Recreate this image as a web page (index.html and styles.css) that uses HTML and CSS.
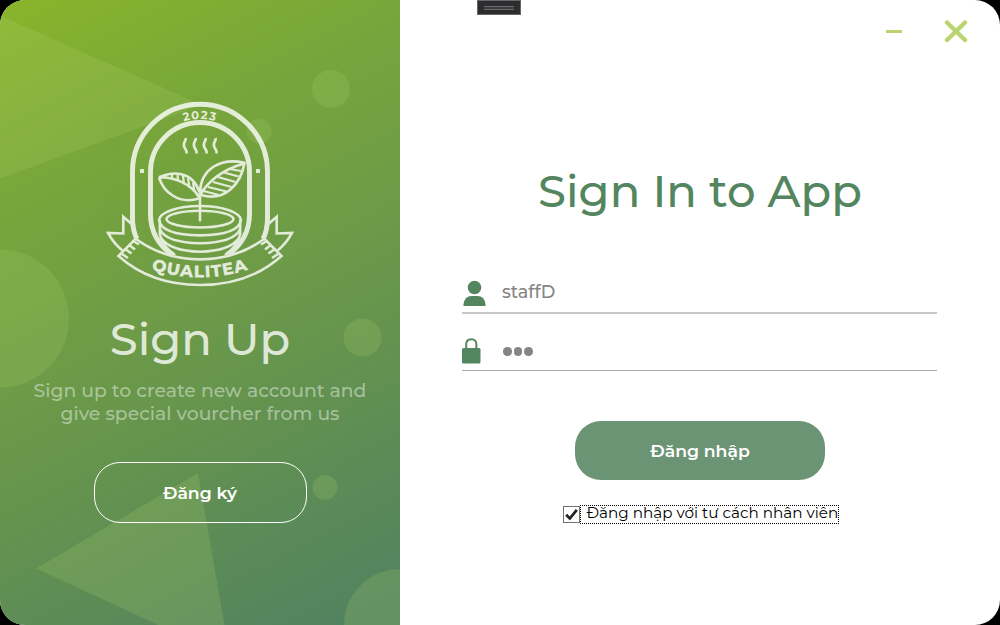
FILE: index.html
```html
<!DOCTYPE html>
<html lang="vi">
<head>
<meta charset="utf-8">
<title>Sign In</title>
<link rel="stylesheet" href="styles.css">
</head>
<body>
<div class="window">
  <aside class="promo">
    <svg class="shapes" viewBox="0 0 400 625" aria-hidden="true">
      <path d="M0 15.500L202 105L0 178.500Z"/>
      <circle cx="331" cy="89" r="19"/>
      <circle cx="259" cy="131" r="12.500"/>
      <circle cx="0" cy="318.500" r="69"/>
      <circle cx="362.500" cy="337.500" r="19"/>
      <circle cx="325" cy="487.500" r="12.500"/>
      <circle cx="400" cy="625" r="56"/>
      <path d="M198 473L36 568.500L158 625H224.500Z"/>
    </svg>
    <svg class="logo" viewBox="105 100 190 188" role="img" aria-label="Qualitea">
      <defs>
        <path id="year-arc" d="M146 173A54 54 0 0 1 254 173"/>
        <path id="name-arc" d="M140 265.500Q200 289.500 260 265.500"/>
        <g id="half" fill="none" stroke="#fff" stroke-width="2.600">
          <path stroke-width="4.900" d="M200 104.200A67.500 67.500 0 0 0 132.500 171.700V219Q132.800 231 137 239"/>
          <path stroke-width="4.900" d="M200 122.500A49.500 49.500 0 0 0 150.500 172V215Q151 240 172 254.500"/>
          <path d="M134 226L123.300 216.800V233.500L108 232.900Q114 244 123 251M136 238.300L118.500 256Q151 285 200 285M136 239Q163 259 200 259.400"/>
          <path d="M132.500 240.500L139 244.500M128.500 244.500L135 249.500M124.500 248.500L131.500 253.500M120.500 253L128 258"/>
          <path d="M200 206A41 14.600 0 0 0 159 220.600Q162 235 200 235.400M200 210.700A33.500 8.400 0 0 0 200 227.500M159.800 220V234Q162 246 175 255M160 229.500Q166 242.500 200 243.300M161 238Q170 251 200 251.700"/>
        </g>
      </defs>
      <use href="#half"/>
      <use href="#half" transform="matrix(-1 0 0 1 400 0)"/>
      <g fill="none" stroke="#fff" stroke-width="2.600" stroke-linejoin="round">
        <path d="M200 189V221.500"/>
        <path d="M159 177.300C172 171.500 192 170 199.500 192M159 177.300C163 191 178 205 199 198.500M159 177.300C175 177 191 184 199 197"/>
        <path d="M200 192C201 169 220 157.500 244.500 162.700C241 184 225 202 201 195M200 195C209 180 225 169 244 163.500"/>
        <path stroke-width="2.200" d="M172 174V179M177.500 174.500L178 181M183 175.500L184 184M188 178L189.500 187.500M193 182.500L194.500 191.500"/>
        <path stroke-width="2.200" d="M230 169L241 171M224 172.500L238.500 176.500M218 177L235.500 182M213 182L231.500 187M208 187L226.500 191.500M203.500 191L219 195"/>
        <path stroke-width="2.700" d="M185.500 138c1 3-2.500 4-1.500 8s3.500 4 2.500 7.500M195.500 138c1 3-2.500 4-1.500 8s3.500 4 2.500 7.500M205.500 138c1 3-2.500 4-1.500 8s3.500 4 2.500 7.500M215.500 138c1 3-2.500 4-1.500 8s3.500 4 2.500 7.500"/>
      </g>
      <path fill="#fff" d="M140 169h4v4h-4zM256 169h4v4h-4z"/>
      <text class="logo-year"><textPath href="#year-arc" startOffset="50%">2023</textPath></text>
      <text class="logo-name"><textPath href="#name-arc" startOffset="50%">QUALITEA</textPath></text>
    </svg>
    <h1 class="promo-title">Sign Up</h1>
    <p class="promo-text">Sign up to create new account and<br>give special vourcher from us</p>
    <button class="register"><span>Đăng ký</span></button>
  </aside>
  <main class="login">
    <div class="handle"><i></i></div>
    <div class="controls">
      <svg width="18" height="4" viewBox="0 0 18 4"><path class="control" d="M1 2.500H17" stroke-width="3" stroke-linecap="butt"/></svg>
      <svg width="24" height="24" viewBox="0 0 24 24"><path class="control" d="M3 3.500L21 21M21 3.500L3 21" stroke-width="4.400" stroke-linecap="round"/></svg>
    </div>
    <h2 class="login-title">Sign In to App</h2>
    <div class="field">
      <svg class="icon" width="26" height="28" viewBox="0 0 26 28"><circle cx="12.500" cy="8.500" r="6.800"/><path d="M1.500 27V25.500Q2.500 17 9.500 17H15.500Q22.500 17 23.500 25.500V27Z"/></svg>
      <span class="value">staffD</span>
    </div>
    <div class="field password">
      <svg class="icon" width="26" height="28" viewBox="0 0 26 28"><rect x="0" y="11" width="18.500" height="15.500" rx="1.500"/><path class="shackle" d="M4.200 12V7.500Q4.200 2.300 9.300 2.300T14.400 7.500V12"/></svg>
      <span class="dots"><i></i><i></i><i></i></span>
    </div>
    <button class="submit"><span>Đăng nhập</span></button>
    <label class="staff">
      <svg width="17" height="17" viewBox="0 0 17 17"><rect x="0.500" y="0.500" width="16" height="16" fill="#fff" stroke="#707070"/><path d="M3.200 8.800L6.800 12.500L13.800 3.800" fill="none" stroke="#212121" stroke-width="2.700"/></svg>
      <span class="staff-box">Đăng nhập với tư cách nhân viên</span>
    </label>
  </main>
</div>
</body>
</html>
```
FILE: styles.css
```css
* { box-sizing: border-box; }
body {
  margin: 0;
  background: #000;
  font-family: Montserrat, Inter, "Noto Sans", sans-serif;
  font-weight: 500;
}
h1, h2, p { margin: 0; font-weight: 500; white-space: nowrap; }
button { font: inherit; padding: 0; }
.window {
  display: flex;
  width: 1000px;
  height: 625px;
  border-radius: 25px;
  overflow: hidden;
  background: #fff;
}
.promo {
  position: relative;
  width: 400px;
  display: flex;
  flex-direction: column;
  align-items: center;
  background: linear-gradient(153deg, #87b42b 2%, #78a63b 25%, #6c9a48 50%, #52835f 96%);
}
.shapes { position: absolute; inset: 0; fill: rgba(173, 208, 110, 0.2); }
.logo { position: relative; width: 190px; height: 188px; margin-top: 100px; opacity: 0.8; }
.logo text { fill: #fff; text-anchor: middle; }
.logo-year { font-size: 11.500px; font-weight: 700; letter-spacing: 1.200px; }
.logo-name { font-size: 17px; font-weight: 800; letter-spacing: 0.900px; }
.promo-title {
  position: relative;
  margin-top: 23px;
  font-size: 45px;
  line-height: 56px;
  color: rgba(255, 255, 255, 0.8);
}
.promo-text {
  position: relative;
  margin-top: 12px;
  font-size: 18.800px;
  line-height: 23px;
  text-align: center;
  color: rgba(255, 255, 255, 0.44);
}
.register {
  position: relative;
  width: 213px;
  height: 61px;
  margin-top: 37px;
  border: 1.500px solid #fff;
  border-radius: 26px;
  background: none;
  color: #fff;
  font-size: 17.300px;
  font-weight: 600;
}
.login {
  width: 600px;
  display: flex;
  flex-direction: column;
  align-items: center;
}
.handle {
  align-self: flex-start;
  width: 44px;
  height: 15px;
  margin-left: 77px;
  padding: 5px 6px;
  border: 1px solid #666;
  background: #2d2d30;
}
.handle i { display: block; height: 4px; border: solid #6a6a6a; border-width: 1px 0; background: #3c3c40; }
.controls {
  align-self: flex-end;
  display: flex;
  align-items: center;
  gap: 41px;
  margin: 4px 32px 0 0;
}
.control { fill: none; stroke: #bad470; }
.login-title {
  margin-top: 120px;
  font-size: 45px;
  line-height: 56px;
  color: #53855f;
}
.field {
  width: 475px;
  height: 35px;
  margin: 60px 1px 0 0;
  display: flex;
  align-items: flex-start;
  border-bottom: 2px solid #c8c8c8;
}
.password { height: 34px; margin-top: 23px; border-bottom: 1px solid #aaa; }
.icon { flex: none; fill: #53855f; }
.shackle { fill: none; stroke: #53855f; stroke-width: 2; }
.value { margin-left: 14px; font-size: 17.600px; line-height: 26px; color: #858585; }
.dots { display: flex; gap: 2px; margin: 10px 0 0 15px; }
.dots i { width: 8.500px; height: 8.500px; border-radius: 50%; background: #858585; }
.submit {
  width: 250px;
  height: 59px;
  margin-top: 50px;
  border: 0;
  border-radius: 26px;
  background: #6a9474;
  color: #fff;
  font-size: 17.300px;
  font-weight: 600;
}
.staff { display: flex; align-items: center; margin-top: 25px; white-space: nowrap; }
.staff svg { margin-left: 1px; }
.staff-box {
  width: 259px;
  height: 19px;
  padding-left: 6px;
  border: 1px dotted #000;
  font-size: 15.200px;
  line-height: 14px;
  font-weight: 400;
  color: #000;
}
```
